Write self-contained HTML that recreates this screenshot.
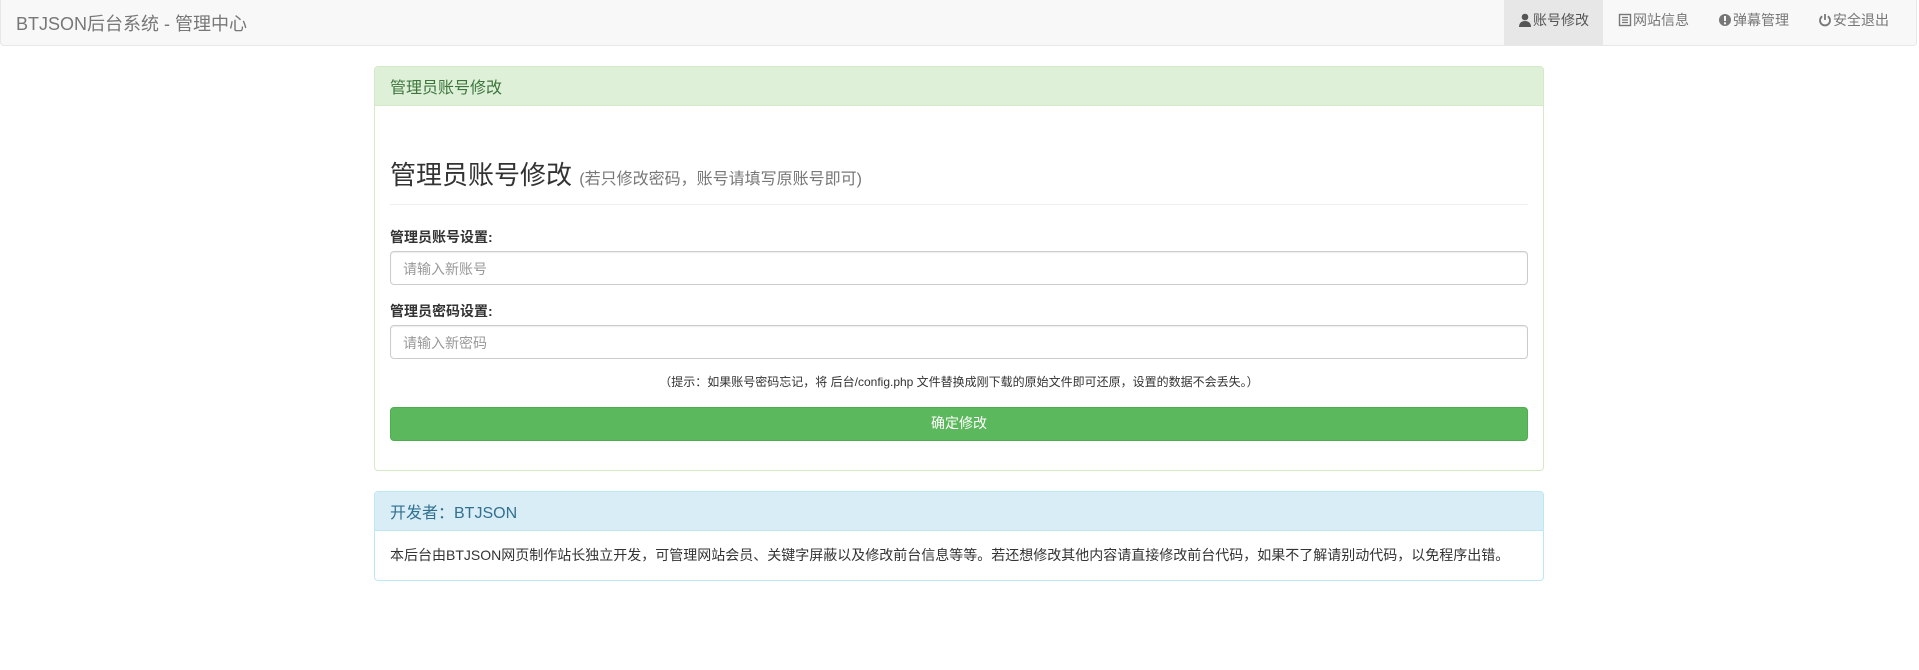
<!DOCTYPE html>
<html><head><meta charset="utf-8"><style>
*{box-sizing:border-box;margin:0;padding:0}
body{width:1919px;height:670px;background:#fff;font-family:"Liberation Sans","Noto Sans CJK SC",sans-serif;color:#333;font-size:14px;position:relative;overflow:hidden}
.nav{position:absolute;left:0;top:0;width:1917px;height:46px;background:#f8f8f8;border:1px solid #e7e7e7;border-top:none;border-radius:0 0 4px 4px}
.brand{position:absolute;left:15px;top:10px;font-size:18px;color:#777}
.item{position:absolute;top:0;height:45px;line-height:41px;color:#777;font-size:14px;padding:0 14px}
.item.act{background:#e7e7e7;color:#555}
.item svg{vertical-align:-2px;margin-right:1px}
.panel{position:absolute;left:374px;width:1170px;border:1px solid #d6e9c6;border-radius:4px;background:#fff}
.ph{height:39px;background:#dff0d8;border-bottom:1px solid #d6e9c6;color:#3c763d;font-size:16px;padding:7px 15px;border-radius:3px 3px 0 0}
.p2{border-color:#bce8f1}
.p2 .ph{background:#d9edf7;border-color:#bce8f1;color:#31708f}
h1{position:absolute;left:15px;top:88px;font-size:26px;font-weight:400;color:#333}
h1 small{font-size:16px;color:#777}
.hr{position:absolute;left:15px;right:15px;top:137px;border-top:1px solid #eee}
.lbl{position:absolute;left:15px;font-weight:bold;font-size:14px}
.inp{position:absolute;left:15px;right:15px;height:34px;border:1px solid #ccc;border-radius:4px;box-shadow:inset 0 1px 1px rgba(0,0,0,.075);padding:7px 12px;color:#999;font-size:14px}
.hint{position:absolute;left:0;right:0;top:306px;text-align:center;font-size:12px;color:#333}
.btn{position:absolute;left:15px;right:15px;top:340px;height:34px;background:#5cb85c;border:1px solid #4cae4c;border-radius:4px;color:#fff;text-align:center;line-height:31px;font-size:14px}
</style></head><body>
<div class="nav">
<div class="brand">BTJSON后台系统 - 管理中心</div>
<div class="item act" style="left:1503px;width:99px"><svg width="14" height="14" viewBox="0 0 14 14"><circle cx="7" cy="4" r="3.3" fill="#555"/><path d="M1 14c0-4 2.5-6 6-6s6 2 6 6z" fill="#555"/></svg>账号修改</div>
<div class="item" style="left:1603px"><svg width="14" height="14" viewBox="0 0 14 14"><rect x="1.5" y="1.5" width="11" height="11" fill="none" stroke="#777" stroke-width="1.4"/><path d="M4 4.5h6M4 7h6M4 9.5h6" stroke="#777" stroke-width="1.2"/></svg>网站信息</div>
<div class="item" style="left:1703px"><svg width="14" height="14" viewBox="0 0 14 14"><circle cx="7" cy="7" r="6" fill="#777"/><rect x="6" y="3" width="2" height="5" fill="#f8f8f8"/><rect x="6" y="9.3" width="2" height="2" fill="#f8f8f8"/></svg>弹幕管理</div>
<div class="item" style="left:1803px"><svg width="14" height="14" viewBox="0 0 14 14"><path d="M4.2 3.3A5 5 0 1 0 9.8 3.3" fill="none" stroke="#777" stroke-width="1.8"/><path d="M7 1v6" stroke="#777" stroke-width="1.8"/></svg>安全退出</div>
</div>

<div class="panel" style="top:66px;height:405px">
<div class="ph">管理员账号修改</div>
<h1>管理员账号修改 <small>(若只修改密码，账号请填写原账号即可)</small></h1>
<div class="hr"></div>
<div class="lbl" style="top:160px">管理员账号设置:</div>
<div class="inp" style="top:184px">请输入新账号</div>
<div class="lbl" style="top:234px">管理员密码设置:</div>
<div class="inp" style="top:258px">请输入新密码</div>
<div class="hint">（提示：如果账号密码忘记，将 后台/config.php 文件替换成刚下载的原始文件即可还原，设置的数据不会丢失。）</div>
<div class="btn">确定修改</div>
</div>

<div class="panel p2" style="top:491px;height:90px">
<div class="ph">开发者：BTJSON</div>
<div style="padding:14px 15px;font-size:14px">本后台由BTJSON网页制作站长独立开发，可管理网站会员、关键字屏蔽以及修改前台信息等等。若还想修改其他内容请直接修改前台代码，如果不了解请别动代码，以免程序出错。</div>
</div>
</body></html>
